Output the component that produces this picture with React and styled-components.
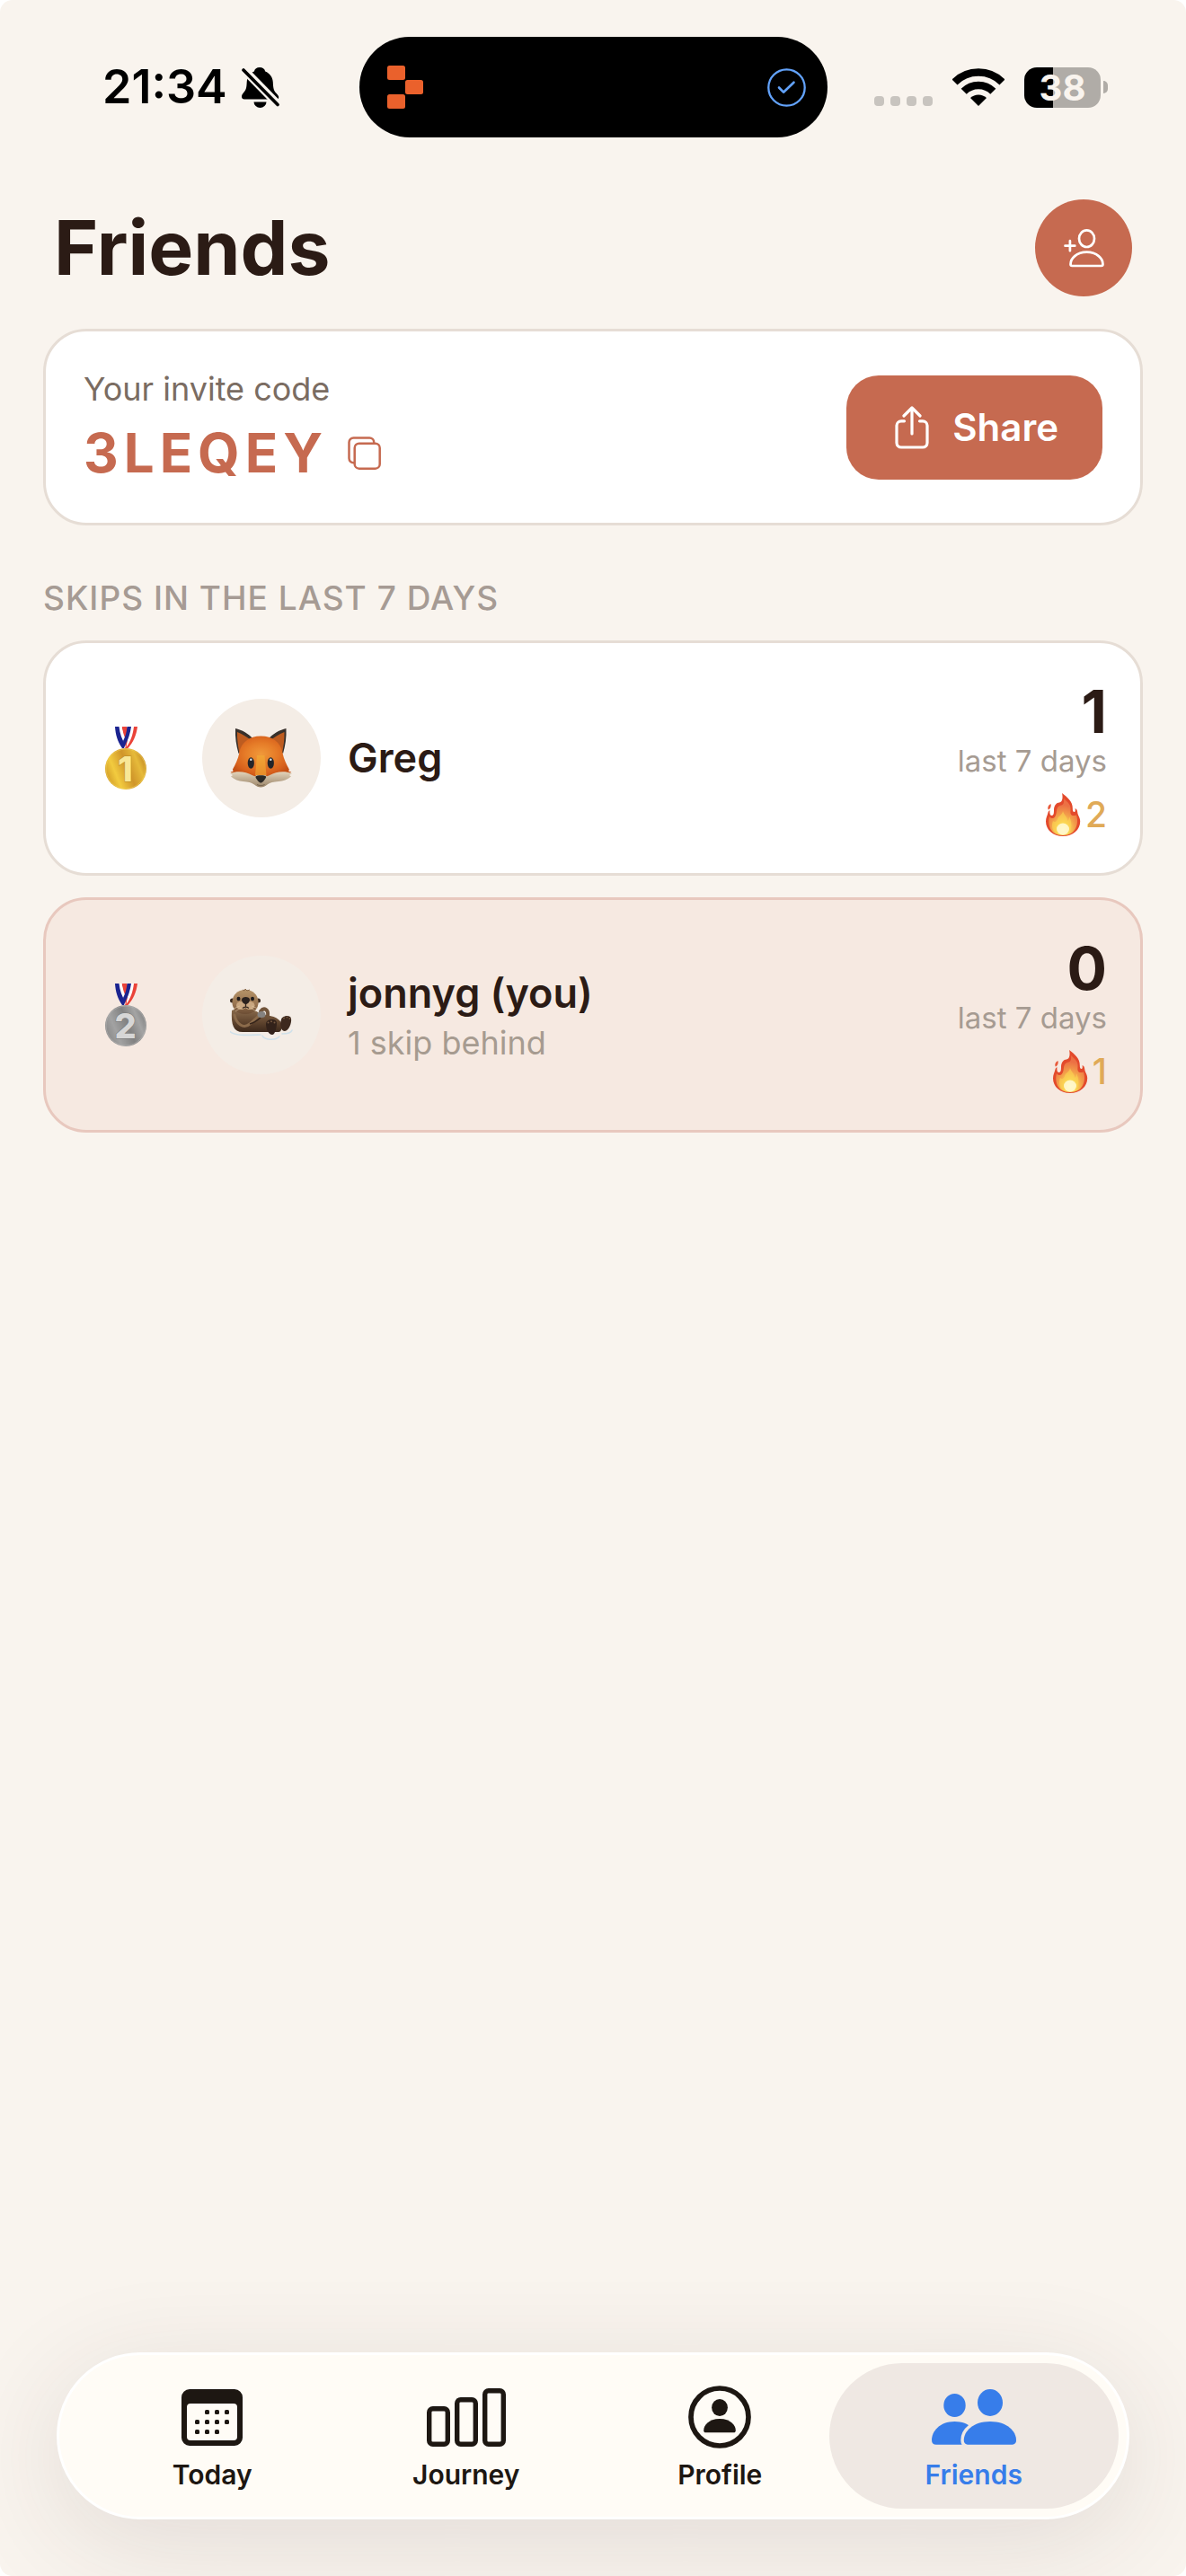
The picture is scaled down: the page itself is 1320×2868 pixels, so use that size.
import { useId } from "react";
import styled, { createGlobalStyle } from "styled-components";

const GlobalStyle = createGlobalStyle`
  * {
    box-sizing: border-box;
  }
  body {
    margin: 0;
    background: #ffffff;
    font-family: Inter, "Liberation Sans", sans-serif;
    color: #2b1b15;
  }
  h1, h2, p, ul {
    margin: 0;
    padding: 0;
  }
  svg {
    display: block;
    flex: none;
  }
`;

const Screen = styled.div`
  display: flex;
  flex-direction: column;
  min-height: 100vh;
  padding: 41px 0 63px;
  background: #f9f4ee;
  border-radius: 14px;
  overflow: hidden;
`;

const StatusBar = styled.div`
  display: grid;
  grid-template-columns: 1fr auto 1fr;
  align-items: center;
`;

const StatusLeft = styled.div`
  display: flex;
  align-items: center;
  gap: 16px;
  padding-left: 114px;
  color: #000000;
`;

const Clock = styled.span`
  font-size: 52px;
  line-height: 60px;
  font-weight: 600;
`;

const Island = styled.div`
  display: flex;
  align-items: center;
  justify-content: space-between;
  width: 521px;
  height: 112px;
  padding: 0 24px 0 31px;
  border-radius: 56px;
  background: #000000;
`;

const StatusRight = styled.div`
  display: flex;
  align-items: center;
  justify-content: flex-end;
  gap: 22px;
  padding-right: 87px;
`;

const SignalDots = styled.div`
  display: flex;
  align-self: flex-end;
  gap: 7px;
  padding-bottom: 2px;

  span {
    width: 11px;
    height: 11px;
    border-radius: 4px;
    background: #c8c4bf;
  }
`;

const Battery = styled.div`
  display: flex;
  align-items: center;
  gap: 3px;
`;

const BatteryBody = styled.span`
  width: 85px;
  border-radius: 14px;
  background: linear-gradient(90deg, #000000 38%, #b0aca7 38%);
  color: #f9f4ee;
  font-size: 40px;
  line-height: 45px;
  font-weight: 700;
  text-align: center;
`;

const BatteryTip = styled.span`
  width: 5px;
  height: 14px;
  border-radius: 0 6px 6px 0;
  background: #b0aca7;
`;

const Header = styled.header`
  display: flex;
  align-items: center;
  justify-content: space-between;
  padding: 69px 60px 36px;
`;

const Title = styled.h1`
  font-size: 84px;
  line-height: 100px;
  font-weight: 700;
`;

const AddButton = styled.button`
  display: grid;
  place-items: center;
  width: 108px;
  height: 108px;
  padding: 0;
  border: 0;
  border-radius: 50%;
  background: #c66a50;
`;

const Content = styled.main`
  padding: 0 48px;
`;

const InviteCard = styled.section`
  display: flex;
  align-items: center;
  justify-content: space-between;
  padding: 42px;
  border: 3px solid #e6ddd5;
  border-radius: 48px;
  background: #ffffff;
`;

const InviteLabel = styled.p`
  margin-bottom: 13px;
  color: #7a6c62;
  font-size: 36px;
  line-height: 44px;
`;

const CodeRow = styled.div`
  display: flex;
  align-items: center;
  gap: 22px;
`;

const Code = styled.span`
  color: #c66a50;
  font-size: 60px;
  line-height: 72px;
  font-weight: 700;
  letter-spacing: 6px;
`;

const CopyButton = styled.button`
  padding: 0;
  border: 0;
  background: none;
`;

const ShareButton = styled.button`
  display: flex;
  align-items: center;
  gap: 26px;
  height: 116px;
  padding: 0 49px 0 54px;
  border: 0;
  border-radius: 36px;
  background: #c66a50;
  color: #ffffff;
  font-family: inherit;
  font-size: 42px;
  line-height: 52px;
  font-weight: 600;
`;

const SectionTitle = styled.h2`
  padding: 57px 0 23px;
  color: #a69b94;
  font-size: 37px;
  line-height: 48px;
  font-weight: 500;
  letter-spacing: 1px;
`;

const Board = styled.ul`
  display: flex;
  flex-direction: column;
  gap: 24px;
  list-style: none;
`;

const Row = styled.li`
  display: flex;
  align-items: center;
  padding: 39px 37px 39px 39px;
  border: 3px solid ${({ $me }) => ($me ? "#e8c8be" : "#e6ddd5")};
  border-radius: 48px;
  background: ${({ $me }) => ($me ? "#f6e9e1" : "#ffffff")};
`;

const Rank = styled.div`
  display: grid;
  justify-items: center;
  width: 99px;
  margin-right: 36px;
`;

const Avatar = styled.div`
  display: grid;
  place-items: center;
  width: 132px;
  height: 132px;
  margin-right: 30px;
  border-radius: 50%;
  background: #f4ede6;
`;

const Who = styled.div`
  display: flex;
  flex: 1;
  flex-direction: column;
  gap: 2px;
`;

const Name = styled.span`
  font-size: 45px;
  line-height: 60px;
  font-weight: 600;
`;

const Behind = styled.span`
  color: #a69b90;
  font-size: 36px;
  line-height: 46px;
`;

const Score = styled.div`
  display: flex;
  flex-direction: column;
  align-items: flex-end;
`;

const Skips = styled.span`
  font-size: 66px;
  line-height: 74px;
  font-weight: 700;
`;

const Period = styled.span`
  color: #a69b92;
  font-size: 33px;
  line-height: 36px;
`;

const Streak = styled.span`
  display: flex;
  align-items: center;
  gap: 5px;
  margin-top: 16px;
  color: #e0aa57;
  font-size: 39px;
  line-height: 52px;
  font-weight: 500;
`;

const TabBar = styled.nav`
  display: grid;
  grid-template-columns: repeat(4, 1fr);
  margin: auto 63px 0;
  padding: 9px 29px;
  border: 3px solid #ffffff;
  border-radius: 93px;
  background: #fffcf6;
  box-shadow: 0 24px 120px rgba(60, 40, 45, 0.12);
`;

const Tab = styled.a`
  display: flex;
  flex-direction: column;
  align-items: center;
  gap: 11px;
  padding: 25px 0 20px;
  border-radius: 81px;
  color: #1d1712;
  font-size: 30px;
  line-height: 36px;
  font-weight: 600;
  text-decoration: none;

  ${({ $active }) =>
    $active &&
    `
    margin: 0 -20px;
    background: #efe8e3;
    color: #377dea;
  `}
`;

const TabIcon = styled.span`
  display: grid;
  place-items: center;
  height: 70px;
`;

const BellOffIcon = () => (
  <svg width="42" height="46" viewBox="0 0 42 46" aria-hidden="true">
    <path
      d="M20 1c3.3 0 5.6 1.700 6.200 4.400 5 2 8.300 6.400 8.600 12 .3 6.500.700 9 3.400 12.200 2 2.300 3 3.300 3 5 0 1.200-.9 1.900-2.600 1.900H3c-1.900 0-3-1.100-3-3 0-2 1-3.200 2.800-5.300 2.400-2.900 2.600-5.200 2.900-10.800.3-5.600 3.400-10 8.200-12C14.500 2.700 16.700 1 20 1z"
      fill="#000"
    />
    <path d="M13.500 39.500h14a7 6.500 0 0 1-14 0z" fill="#000" />
    <path d="M-1 0L43 45" stroke="#f9f4ee" strokeWidth="9" />
    <path d="M2 4L40 42.500" stroke="#000" strokeWidth="3.600" strokeLinecap="round" />
  </svg>
);

const BlocksLogo = () => (
  <svg width="40" height="48" viewBox="0 0 40 48" fill="#ea612c" aria-hidden="true">
    <rect width="20" height="16" rx="2.500" />
    <rect x="20" y="16" width="20" height="16" rx="2.500" />
    <rect y="32" width="20" height="16" rx="2.500" />
  </svg>
);

const CheckCircleIcon = () => (
  <svg width="43" height="43" viewBox="0 0 43 43" fill="none" stroke="#62a2fa" aria-hidden="true">
    <circle cx="21.500" cy="21.500" r="20.200" strokeWidth="2.300" />
    <path d="M13 21.500l5 5.200 11.500-11" strokeWidth="2.600" strokeLinecap="round" strokeLinejoin="round" />
  </svg>
);

const WifiIcon = () => (
  <svg width="58" height="42" viewBox="0 0 58 42" fill="none" stroke="#000" strokeWidth="8.600" aria-hidden="true">
    <path d="M2.500 15.500a37.500 37.500 0 0 1 53 0" />
    <path d="M12.700 25.700a23 23 0 0 1 32.600 0" />
    <path d="M20 33a13 13 0 0 1 18 0l-9 9z" fill="#000" stroke="none" />
  </svg>
);

const AddPersonIcon = () => (
  <svg width="45" height="43" viewBox="0 0 45 43" fill="none" stroke="#fff" strokeWidth="2.700" strokeLinecap="round" strokeLinejoin="round" aria-hidden="true">
    <ellipse cx="25.500" cy="10.700" rx="8.500" ry="9.300" />
    <path d="M9.300 41c-1.200 0-1.800-.6-1.800-1.700C7.500 33 14 25.700 25.500 25.700S43.500 33 43.500 39.300c0 1.100-.6 1.700-1.800 1.700z" />
    <path d="M1.500 18.700h10.800M6.900 13.200v11" />
  </svg>
);

const CopyIcon = () => (
  <svg width="37" height="37" viewBox="0 0 37 37" fill="none" stroke="#c66a50" strokeWidth="2.500" aria-hidden="true">
    <rect x="7.700" y="7.700" width="28" height="28" rx="5" />
    <path d="M7.700 29.300H6.500a5 5 0 0 1-5-5V6.400a5 5 0 0 1 5-5h17.700a5 5 0 0 1 5 5v1.300" />
  </svg>
);

const ShareIcon = () => (
  <svg width="38" height="48" viewBox="0 0 38 48" fill="none" stroke="#fff" strokeWidth="3.200" strokeLinecap="round" strokeLinejoin="round" aria-hidden="true">
    <path d="M10.500 16.800H7a5 5 0 0 0-5 5V41a5 5 0 0 0 5 5h24a5 5 0 0 0 5-5V21.800a5 5 0 0 0-5-5h-3.500" />
    <path d="M19 31V2.500M10 11l9-9 9 9" />
  </svg>
);

const Medal = ({ place, metal }) => {
  const id = useId();
  const gold = metal === "gold";
  return (
    <svg width="46" height="70" viewBox="0 0 46 70" role="img" aria-label={`${metal} medal`}>
      <defs>
        <linearGradient id={id} x1="0" y1="0.700" x2="1" y2="0.300">
          <stop offset="0" stopColor={gold ? "#cf9724" : "#868686"} />
          <stop offset="0.250" stopColor={gold ? "#f2cb3f" : "#a2a2a2"} />
          <stop offset="0.550" stopColor={gold ? "#d0952a" : "#828282"} />
          <stop offset="0.800" stopColor={gold ? "#e6ba3a" : "#a4a4a4"} />
          <stop offset="1" stopColor={gold ? "#c08522" : "#808080"} />
        </linearGradient>
      </defs>
      <path d="M18.500 0H24l5 12-6 12z" fill="#ea4339" />
      <path d="M31 0h5c-1 9-5 18-10.500 24H22c5-7 8-15 9-24z" fill="#ea4339" />
      <path d="M27.500 0H32c-1 9-4 17-8.500 23z" fill="#fff" />
      <path d="M14.500 0h4c1 6 3 11 4.500 15l-1.500 8C17 16 15 8 14.500 0z" fill="#fff" />
      <path d="M11 0h4.500c1 8 3 14 7 20l-1.500 4h-2C14 17 11.500 9 11 0z" fill="#1b2490" />
      <path d="M24.500 0H29c-1 7-3 14-7.500 22L20 16c2.500-5 4-10 4.500-16z" fill="#1b2490" />
      <circle cx="23" cy="47" r="23" fill={`url(#${id})`} />
      <circle cx="23" cy="47" r="22" fill="none" stroke={gold ? "#f0cf58" : "#b4b4b4"} strokeWidth="1" opacity="0.600" />
      <text
        x="22.500"
        y="61"
        textAnchor="middle"
        fontFamily="Inter, sans-serif"
        fontSize="38"
        fontWeight="800"
        fill={gold ? "#f9e795" : "#d6d6d6"}
        stroke={gold ? "#b98a26" : "#777777"}
        strokeWidth="1"
        paintOrder="stroke"
      >
        {place}
      </text>
    </svg>
  );
};

const Fox = () => (
  <svg width="70" height="66" viewBox="0 0 70 66" role="img" aria-label="Fox">
    <defs>
      <radialGradient id="fox-fur" cx="0.500" cy="0.420" r="0.560">
        <stop offset="0" stopColor="#f0993a" />
        <stop offset="0.450" stopColor="#e67c28" />
        <stop offset="0.800" stopColor="#d8611c" />
        <stop offset="1" stopColor="#c24e13" />
      </radialGradient>
      <linearGradient id="fox-jaw" x1="0" y1="0" x2="0" y2="1">
        <stop offset="0" stopColor="#e2d3ba" />
        <stop offset="1" stopColor="#9a8468" />
      </linearGradient>
    </defs>
    <path d="M6 0c7 1.500 15 6 20 12L9.500 28C7 19 5.500 10 6 0zM62.500 0c-7 1.500-15 6-20 12L59 28c2.500-9 4-18 3.500-28z" fill="#37302b" />
    <path d="M8 4c6 2.500 12 6 16 10L10.500 28C9 20 7.700 12 8 4zM60.500 4c-6 2.500-12 6-16 10L58 28c1.500-8 2.800-16 2.500-24z" fill="#bd5c20" />
    <path d="M34.300 8.500c13 0 22 7 24 18 1.500 8 5 14.500 7.500 19l-.5 2.500 3 .5-10 8H10.500l-10-8 3-.5-.5-2.500c2.500-4.500 6-11 7.500-19 2-11 11-18 23.800-18z" fill="url(#fox-fur)" />
    <path d="M30 30h8.500l2 22h-12.500z" fill="#f4ad36" opacity="0.600" />
    <path d="M0 50c8-3 18-2 24.500 2 2.500 1.500 4 1.500 5 0h9.800c1 1.500 2.500 1.500 5 0C51 48 60.500 47 69 50l-3 2 2 1.500c-4 3.500-9 5-14 5.500-6 .8-9 1-12.500 3.500-4.500 4-10 4-14.500 0-3.500-2.500-6.500-2.700-12.500-3.500C9.500 58.500 5 57 1 53.500L3 52z" fill="url(#fox-jaw)" />
    <ellipse cx="23.300" cy="38.500" rx="3.600" ry="6.200" fill="#23252a" />
    <ellipse cx="45.300" cy="38.500" rx="3.600" ry="6.200" fill="#23252a" />
    <circle cx="23.300" cy="34.700" r="1.300" fill="#d5dce2" />
    <circle cx="45.300" cy="34.700" r="1.300" fill="#d5dce2" />
    <path d="M28.500 53.500c1.500-1.800 10-1.800 11.600 0 .6 1.500-3.600 6.900-5.800 7.200-2.200-.3-6.400-5.700-5.800-7.200z" fill="#2b2926" />
    <path d="M30 62.500c3 1.500 5.600 1.500 8.600 0" fill="none" stroke="#77644f" strokeWidth="1" />
  </svg>
);

const Otter = () => (
  <svg width="70" height="58" viewBox="0 0 70 58" role="img" aria-label="Otter">
    <defs>
      <linearGradient id="otter-head" x1="0" y1="0" x2="0" y2="1">
        <stop offset="0" stopColor="#b59368" />
        <stop offset="0.600" stopColor="#977350" />
        <stop offset="1" stopColor="#6b4c33" />
      </linearGradient>
      <linearGradient id="otter-body" x1="0" y1="0" x2="0" y2="1">
        <stop offset="0" stopColor="#8b6c4d" />
        <stop offset="0.600" stopColor="#5e432d" />
        <stop offset="1" stopColor="#3b281b" />
      </linearGradient>
    </defs>
    <path d="M0 47.500c5 5 20 4 34 3.500M58 50c5 0 10-1 11-4M36 52c2 5 14 6 19 1" fill="none" stroke="#cfe1ea" strokeWidth="1.600" strokeLinecap="round" />
    <path d="M2 24c8-3 26-3 31 4 8 1 18 2 23 8 3 4 2 12-2 12H14C4 48 1 40 2 24z" fill="url(#otter-body)" />
    <path d="M5 29c2 10 10 16 17 10l10-9" fill="none" stroke="#8b6b4b" strokeWidth="3" strokeLinecap="round" />
    <path d="M22 39c5-1 8-4 12-7" fill="none" stroke="#35241a" strokeWidth="1.500" />
    <path d="M34 25c4-5 9-2 8 5" fill="none" stroke="#71543a" strokeWidth="4" strokeLinecap="round" />
    <ellipse cx="35" cy="28.500" rx="4.500" ry="3.500" fill="#85827f" />
    <circle cx="2.500" cy="13" r="2.500" fill="#38281d" />
    <circle cx="31.500" cy="13" r="2.500" fill="#38281d" />
    <path d="M17 1c9 0 14 6 14.500 13 .5 8-5 14-14.500 14S2 22 2.500 14C3 7 8 1 17 1z" fill="url(#otter-head)" />
    <path d="M14 1l2 1 1-2 2 2 3-1" fill="none" stroke="#8a694a" strokeWidth="1" />
    <ellipse cx="12.500" cy="18.500" rx="5.500" ry="4.500" fill="#c9a781" />
    <ellipse cx="22" cy="18.500" rx="5.500" ry="4.500" fill="#c9a781" />
    <ellipse cx="9.500" cy="11" rx="2" ry="2.300" fill="#1e1b1c" />
    <ellipse cx="25" cy="11" rx="2" ry="2.300" fill="#1e1b1c" />
    <path d="M13 12c0-4 9-4 9 0 0 3-3 5-4.500 5S13 15 13 12z" fill="#2a211e" />
    <path d="M17.500 17v3M14 21.500c2-1.500 5-1.500 7 0" fill="none" stroke="#33241c" strokeWidth="1.300" />
    <path d="M11 19l-7 3M12 21l-6 4M24 19l7 3M23 21l6 4" stroke="#dfc8a6" strokeWidth="0.600" />
    <path d="M57 34c1-4 10-6 11-1s-3 14-7 14-6-6-4-13z" fill="#3d291e" />
    <path d="M40 39c0-6 12-7 12-1 0 5-2 13-5 13-4 0-7-6-7-12z" fill="#33221a" />
    <g fill="#75573f">
      <circle cx="42.500" cy="37.500" r="1" />
      <circle cx="46" cy="36.300" r="1" />
      <circle cx="49.500" cy="37.500" r="1" />
      <circle cx="60" cy="32.500" r="1" />
      <circle cx="63.500" cy="31.500" r="1" />
      <circle cx="66.500" cy="33" r="1" />
    </g>
  </svg>
);

const Flame = () => {
  const id = useId();
  return (
    <svg width="39" height="48" viewBox="0 0 39 48" role="img" aria-label="Streak">
      <defs>
        <radialGradient id={id} cx="0.500" cy="0.850" r="0.750">
          <stop offset="0" stopColor="#fffcc8" />
          <stop offset="0.250" stopColor="#fbdc57" />
          <stop offset="0.550" stopColor="#f3a04a" />
          <stop offset="0.900" stopColor="#ec7044" />
        </radialGradient>
      </defs>
      <path d="M5.500 12c.8 3-.8 6-2.800 6.500C1.500 16.500 2.500 13.500 5.500 12z" fill="#e8593a" />
      <path d="M18 0c6 4.500 12 9.500 11.800 17 0 2.500.5 4 1.800 4 1.500 0 1.300-2.500.9-4 1 .5 2.500 1 2.700 4 .3 4 3 6 3 10.500C38.200 41 30 48 19 48S0 41 0 31.500c0-4 1.500-6 2.500-10 .5-1.500 1-2 2-2.500-.4 3 .2 6 2 6 2.500 0 2.500-3.500 2.500-6.500.2-5 3-8 6-8C19 10 19 4 18 0z" fill="#e34a2c" />
      <path d="M20 6c4 4 8.500 7 7.500 13-.5 4 .5 6 3.500 6s3-1 3.200 0c2.800 10-1.200 22-15.200 22S1.500 35 4 26c2 3.500 7 3 7.800-5 .5-5 2.200-7 5.200-7.500S20.500 10 20 6z" fill={`url(#${id})`} />
      <path d="M19 20c1 4 5 6 5 11 2-1 2-3 2-5 4 8 4 20-7 20S5 38 8 31c2 2 4 1 5-2 1-4 5-4 6-9z" fill="#fbd551" opacity="0.600" />
      <ellipse cx="19" cy="40" rx="7" ry="6.500" fill="#fffde0" opacity="0.800" />
    </svg>
  );
};

const CalendarIcon = () => (
  <svg width="68" height="63" viewBox="0 0 68 63" fill="currentColor" aria-hidden="true">
    <path
      fillRule="evenodd"
      d="M9 0h50a9 9 0 0 1 9 9v45a9 9 0 0 1-9 9H9a9 9 0 0 1-9-9V9a9 9 0 0 1 9-9zM10 16a4 4 0 0 0-4 4v33a4 4 0 0 0 4 4h48a4 4 0 0 0 4-4V20a4 4 0 0 0-4-4z"
    />
    {[
      [26, 23], [37, 23], [48, 23],
      [15, 34], [26, 34], [37, 34], [48, 34],
      [15, 45], [26, 45], [37, 45],
    ].map(([x, y]) => (
      <rect key={`${x}-${y}`} x={x} y={y} width="5" height="5" rx="1.500" />
    ))}
  </svg>
);

const BarsIcon = () => (
  <svg width="88" height="65" viewBox="0 0 88 65" fill="none" stroke="currentColor" strokeWidth="5.400" aria-hidden="true">
    <rect x="2.700" y="22.700" width="20.600" height="39.600" rx="4" />
    <rect x="33.700" y="12.700" width="20.600" height="49.600" rx="4" />
    <rect x="64.700" y="2.700" width="20.600" height="59.600" rx="4" />
  </svg>
);

const ProfileIcon = () => (
  <svg width="70" height="70" viewBox="0 0 70 70" fill="currentColor" aria-hidden="true">
    <circle cx="35" cy="35" r="32" fill="none" stroke="currentColor" strokeWidth="5.700" />
    <ellipse cx="35" cy="24.500" rx="8.900" ry="9.500" />
    <path d="M19.500 52.200c-1.500 0-2.300-.8-2.300-2.300C17.200 44.500 22.500 37 35 37s17.800 7.500 17.800 12.900c0 1.500-.8 2.300-2.300 2.300z" />
  </svg>
);

const FriendsIcon = () => (
  <svg width="94" height="62" viewBox="0 0 94 62" fill="currentColor" aria-hidden="true">
    <ellipse cx="25.500" cy="18" rx="12.200" ry="13" />
    <ellipse cx="65" cy="15" rx="14" ry="15" />
    <path d="M5 61.700c-3.300 0-5-1.700-5-5C0 47 9 36 25.500 36S51 47 51 56.700c0 3.300-1.700 5-5 5z" />
    <path
      d="M41.500 61.700c-4 0-5.700-1.700-5.700-5C35.800 47 46 36 65 36s29 11 29 20.700c0 3.300-1.700 5-5.700 5z"
      stroke="#efe8e3"
      strokeWidth="7"
      paintOrder="stroke"
    />
  </svg>
);

const friends = [
  { name: "Greg", place: 1, metal: "gold", avatar: <Fox />, skips: 1, streak: 2 },
  {
    name: "jonnyg (you)",
    place: 2,
    metal: "silver",
    avatar: <Otter />,
    behind: "1 skip behind",
    skips: 0,
    streak: 1,
    me: true,
  },
];

const tabs = [
  { label: "Today", icon: <CalendarIcon /> },
  { label: "Journey", icon: <BarsIcon /> },
  { label: "Profile", icon: <ProfileIcon /> },
  { label: "Friends", icon: <FriendsIcon />, active: true },
];

const App = () => {
  return (
    <Screen>
      <GlobalStyle />
      <StatusBar>
        <StatusLeft>
          <Clock>21:34</Clock>
          <BellOffIcon />
        </StatusLeft>
        <Island>
          <BlocksLogo />
          <CheckCircleIcon />
        </Island>
        <StatusRight>
          <SignalDots>
            <span />
            <span />
            <span />
            <span />
          </SignalDots>
          <WifiIcon />
          <Battery>
            <BatteryBody>38</BatteryBody>
            <BatteryTip />
          </Battery>
        </StatusRight>
      </StatusBar>

      <Header>
        <Title>Friends</Title>
        <AddButton type="button" aria-label="Add friend">
          <AddPersonIcon />
        </AddButton>
      </Header>

      <Content>
        <InviteCard>
          <div>
            <InviteLabel>Your invite code</InviteLabel>
            <CodeRow>
              <Code>3LEQEY</Code>
              <CopyButton type="button" aria-label="Copy invite code">
                <CopyIcon />
              </CopyButton>
            </CodeRow>
          </div>
          <ShareButton type="button">
            <ShareIcon />
            Share
          </ShareButton>
        </InviteCard>

        <SectionTitle>SKIPS IN THE LAST 7 DAYS</SectionTitle>
        <Board>
          {friends.map((friend) => (
            <Row key={friend.name} $me={friend.me}>
              <Rank>
                <Medal place={friend.place} metal={friend.metal} />
              </Rank>
              <Avatar>{friend.avatar}</Avatar>
              <Who>
                <Name>{friend.name}</Name>
                {friend.behind && <Behind>{friend.behind}</Behind>}
              </Who>
              <Score>
                <Skips>{friend.skips}</Skips>
                <Period>last 7 days</Period>
                <Streak>
                  <Flame />
                  {friend.streak}
                </Streak>
              </Score>
            </Row>
          ))}
        </Board>
      </Content>

      <TabBar aria-label="Main">
        {tabs.map((tab) => (
          <Tab
            key={tab.label}
            href={`#${tab.label.toLowerCase()}`}
            $active={tab.active}
            aria-current={tab.active ? "page" : undefined}
          >
            <TabIcon>{tab.icon}</TabIcon>
            {tab.label}
          </Tab>
        ))}
      </TabBar>
    </Screen>
  );
};

export default App;
